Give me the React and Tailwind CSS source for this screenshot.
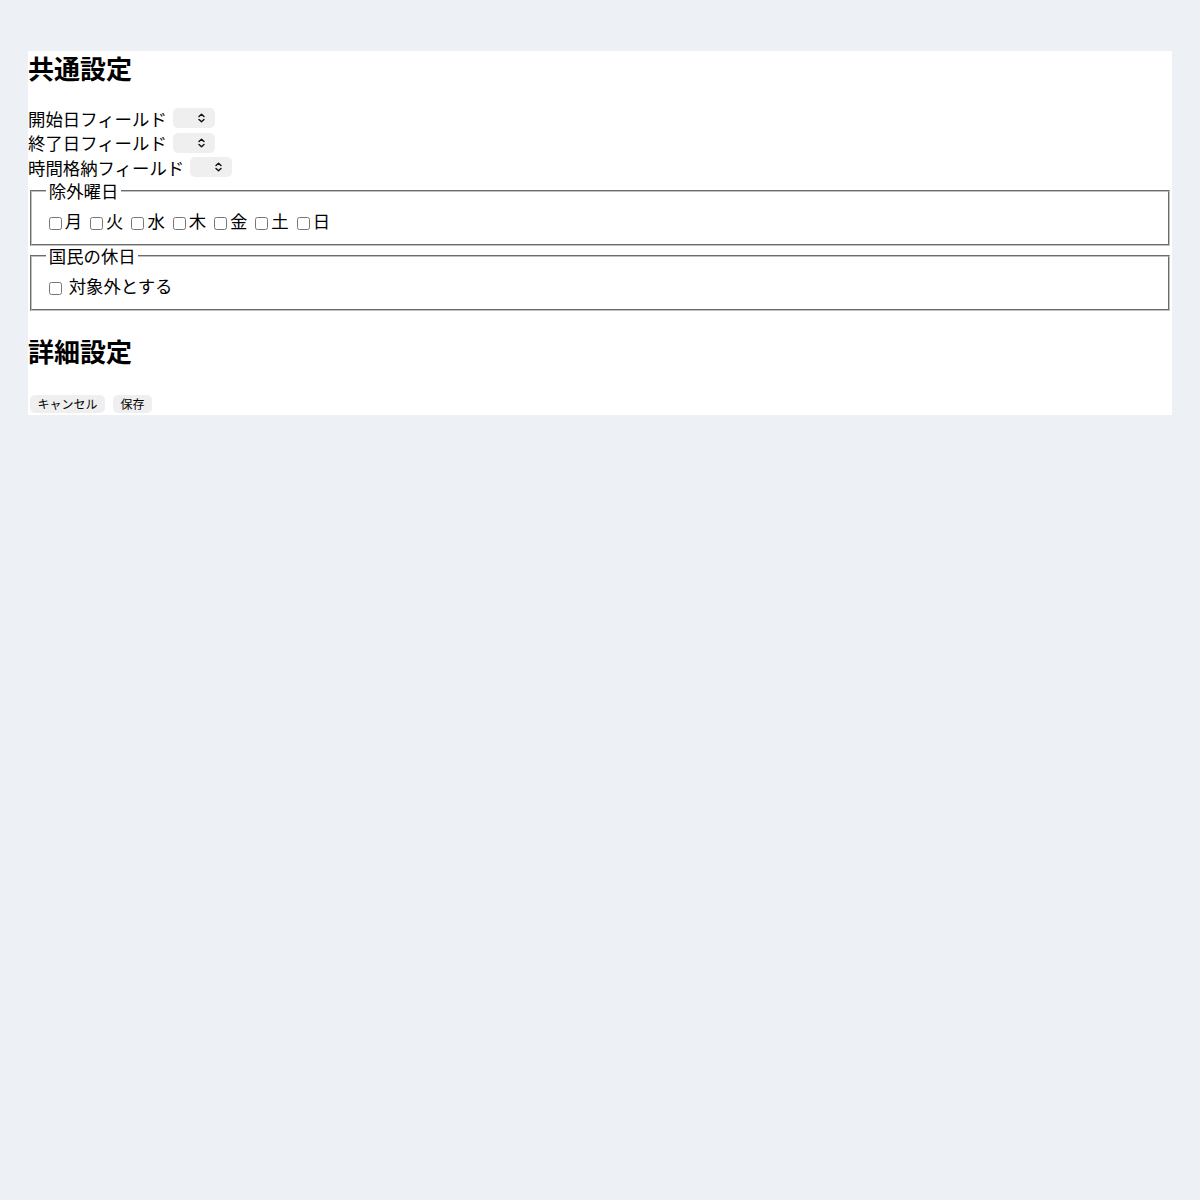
import React from "react";

function Chevron() {
  return (
    <svg
      className="pointer-events-none absolute right-[10px] top-1/2 -translate-y-1/2"
      width="7"
      height="10"
      viewBox="0 0 7 10"
      fill="none"
      stroke="#111"
      strokeWidth="1.4"
      strokeLinecap="round"
      strokeLinejoin="round"
    >
      <path d="M1 3.6 L3.5 1.2 L6 3.6" />
      <path d="M1 6.4 L3.5 8.8 L6 6.4" />
    </svg>
  );
}

function Select() {
  return (
    <span className="relative inline-flex h-[20px] w-[42px] ml-[6px]">
      <select className="h-[20px] w-[42px] appearance-none rounded-[5px] bg-[#efefef] outline-none" />
      <Chevron />
    </span>
  );
}

function Row({ label }) {
  return (
    <div className="flex items-center h-[24.6px]">
      <span>{label}</span>
      <Select />
    </div>
  );
}

function Box() {
  return (
    <input
      type="checkbox"
      className="m-[3px_3px_3px_4px] inline-block h-[13px] w-[13px] align-[-2px]"
    />
  );
}

const days = ["月", "火", "水", "木", "金", "土", "日"];

export default function App() {
  return (
    <div className="min-h-[1200px] bg-[#edf0f5] pt-[51px] px-[28px] font-['Noto_Sans_CJK_JP','Noto_Sans_CJK_SC',sans-serif] text-[17.4px] leading-[1.448] text-black">
      <div className="bg-white">
        <h2 className="text-[26px] font-bold leading-[33px]">共通設定</h2>
        <div className="mt-[22px]">
          <Row label="開始日フィールド" />
          <Row label="終了日フィールド" />
          <Row label="時間格納フィールド" />
        </div>
        <fieldset className="mt-[1px] mx-[2px] border-2 [border-style:groove] border-[#c0c0c0] pt-[6.8px] px-[12.75px] pb-[9.4px]">
          <legend className="ml-[1.5px] px-[2.5px] leading-[20px]">除外曜日</legend>
          <div className="h-[26.8px] leading-[26.8px] whitespace-nowrap">
            {days.map((d) => (
              <React.Fragment key={d}>
                <label>
                  <Box />
                  {d}
                </label>{" "}
              </React.Fragment>
            ))}
          </div>
        </fieldset>
        <fieldset className="mx-[2px] border-2 [border-style:groove] border-[#c0c0c0] pt-[6.8px] px-[12.75px] pb-[9.4px]">
          <legend className="ml-[1.5px] px-[2.5px] leading-[20px]">国民の休日</legend>
          <div className="h-[26.8px] leading-[26.8px]">
            <label>
              <Box /> 対象外とする
            </label>
          </div>
        </fieldset>
        <h2 className="mt-[23.3px] text-[26px] font-bold leading-[33px]">詳細設定</h2>
        <div className="mt-[25.5px] flex h-[22px] items-center gap-[4px]">
          <button className="mx-[2px] h-[18px] rounded-[5px] bg-[#efefef] px-[7.5px] text-[12px] leading-[18px]">
            キャンセル
          </button>
          <button className="mx-[2px] h-[18px] rounded-[5px] bg-[#efefef] px-[7.5px] text-[12px] leading-[18px]">
            保存
          </button>
        </div>
      </div>
    </div>
  );
}
